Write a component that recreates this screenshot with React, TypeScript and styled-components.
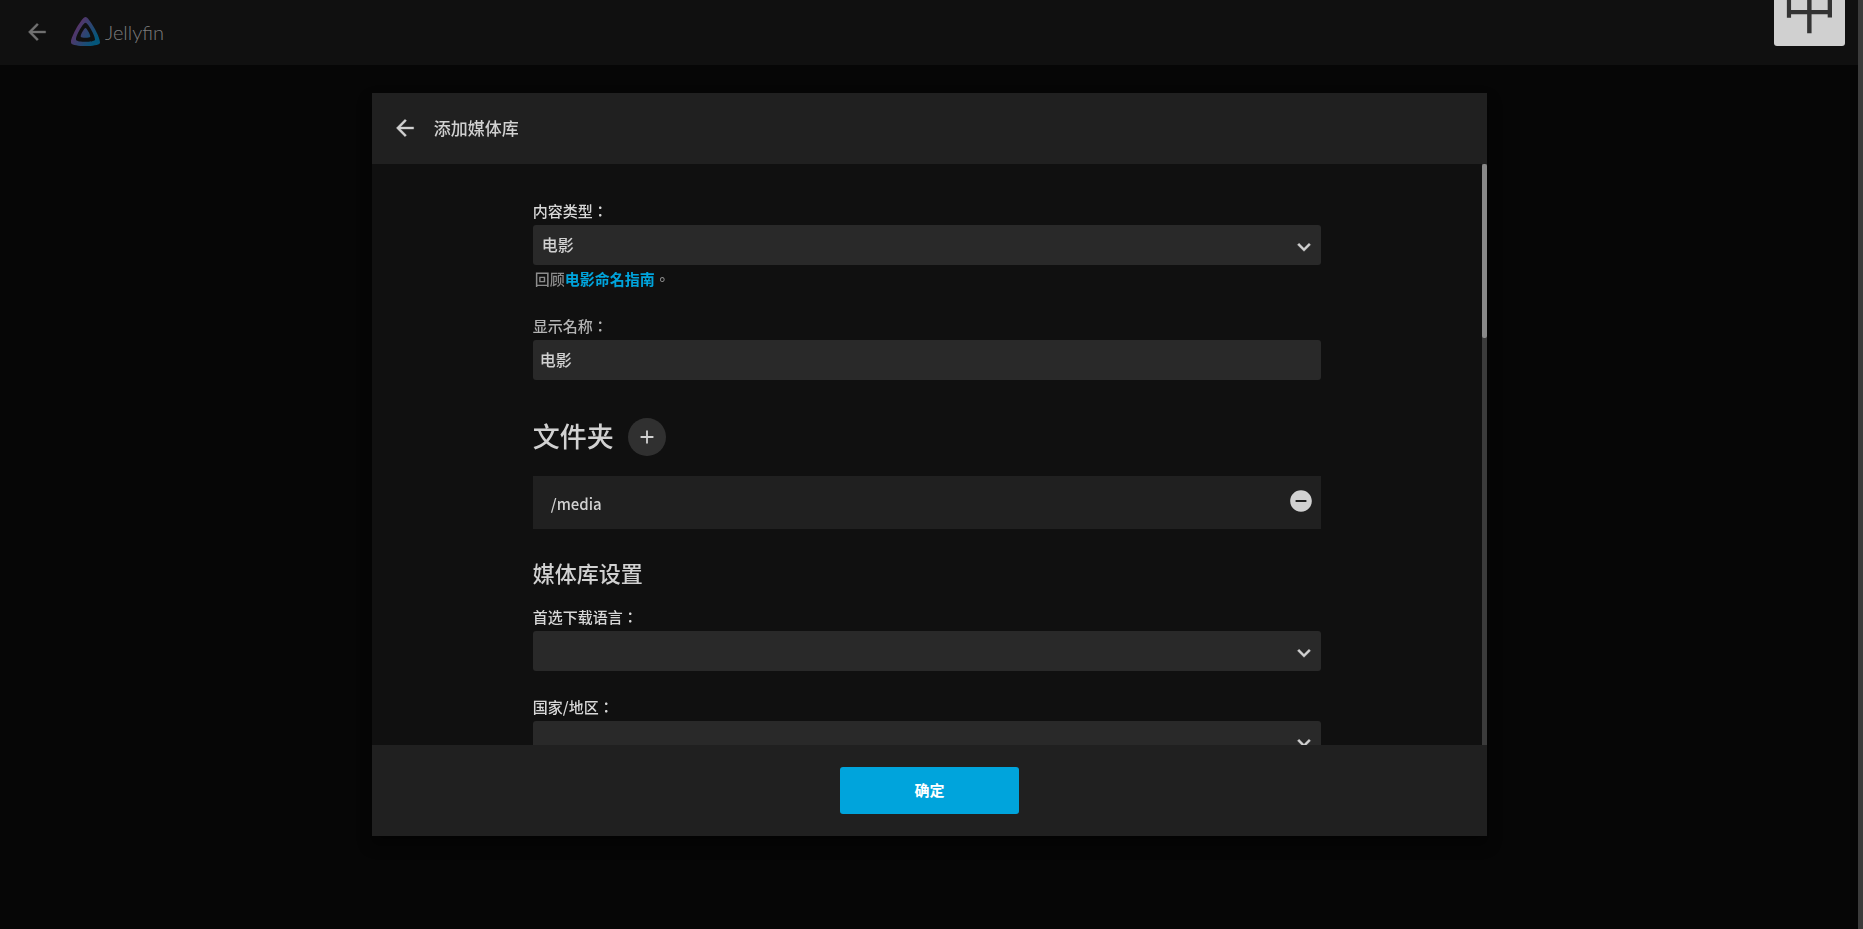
import React, { useState } from 'react';
import styled, { createGlobalStyle } from 'styled-components';
import { MdAdd, MdArrowBack, MdExpandMore, MdRemoveCircle } from 'react-icons/md';

const GlobalStyle = createGlobalStyle`
  *, *::before, *::after { box-sizing: border-box; }
  html { background: #060606; }
  body {
    margin: 0;
    overflow: hidden;
    color: #d1d1d1;
    font-family: "Noto Sans CJK TC", sans-serif;
    font-size: 15px;
    font-weight: 500;
    line-height: 20px;
  }
  button, input, select { font: inherit; color: inherit; }
  path[fill="none"] { stroke: none; }
`;

const Page = styled.div`
  display: flex;
  min-height: 100vh;
  background: #060606;
`;

const Main = styled.div`
  flex: 1;
  min-width: 0;
`;

const TopBar = styled.header`
  display: flex;
  align-items: center;
  gap: 21px;
  height: 65px;
  padding: 0 24px 2px;
  background: #101010;
  color: #717171;
`;

const IconButton = styled.button`
  display: flex;
  flex: none;
  padding: 0;
  border: 0;
  background: none;
  cursor: pointer;
`;

const Brand = styled.a`
  display: flex;
  align-items: center;
  gap: 5px;
  color: #7c7c7c;
  font-family: Lato, sans-serif;
  font-size: 20px;
  font-weight: 300;
  text-decoration: none;
`;

const ScrollTrack = styled.div`
  flex: none;
  width: 5px;
  background: #3b3b3b;
`;

const ScrollThumb = styled.div`
  height: 30%;
  border-radius: 2px;
  background: #888888;
`;

const InputMethodBadge = styled.div`
  position: fixed;
  top: -26px;
  right: 18px;
  width: 71px;
  height: 72px;
  border-radius: 3px;
  background: #d0d0d0;
  color: #333333;
  font-size: 56px;
  font-weight: 400;
  line-height: 60px;
  text-align: center;
`;

const Backdrop = styled.div`
  position: fixed;
  inset: 0 4px 0 0;
  display: flex;
  align-items: center;
  justify-content: center;
`;

const Dialog = styled.section`
  display: flex;
  flex-direction: column;
  width: 60%;
  height: 80%;
  background: #101010;
  box-shadow: 0 8px 12px 1px rgba(0, 0, 0, 0.4);
`;

const DialogHeader = styled.header`
  display: flex;
  flex: none;
  align-items: center;
  gap: 16px;
  height: 71px;
  padding: 0 20px;
  background: #202020;
`;

const DialogTitle = styled.h3`
  margin: 0;
  font-size: 17px;
  font-weight: 500;
  line-height: 24px;
`;

const DialogBody = styled.div`
  display: flex;
  flex: 1;
  min-height: 0;
`;

const Scroller = styled.div`
  flex: 1;
  min-width: 0;
  overflow: hidden;
`;

const Form = styled.form`
  width: 71%;
  margin: 0 auto;
  padding-top: 37px;
`;

const Field = styled.div`
  margin-bottom: 26px;
`;

const Label = styled.label<{ $muted?: boolean }>`
  display: block;
  margin-bottom: 4px;
  color: ${({ $muted }) => ($muted ? '#b4b4b4' : '#d8d8d8')};
`;

const SelectBox = styled.div`
  position: relative;

  svg {
    position: absolute;
    top: 9px;
    right: 4px;
    pointer-events: none;
  }
`;

const Select = styled.select`
  display: block;
  width: 100%;
  height: 40px;
  padding: 0 32px 2px 9px;
  border: 0;
  border-radius: 3px;
  appearance: none;
  background: #292929;
  font-size: 16px;
`;

const TextInput = styled.input`
  display: block;
  width: 100%;
  height: 40px;
  padding: 0 7px 2px;
  border: 0;
  border-radius: 3px;
  background: #292929;
  font-size: 16px;
`;

const Help = styled.div`
  margin-top: 4px;
  padding: 0 0 1px 2px;
  color: #8c8c8c;
`;

const HelpLink = styled.a`
  color: #00a4dc;
  font-weight: 700;
  text-decoration: none;
`;

const FolderHeading = styled.div`
  display: flex;
  align-items: center;
  gap: 14px;
  margin: 38px 0 20px;
`;

const Heading = styled.h1`
  margin: 0;
  font-size: 27px;
  font-weight: 500;
  line-height: 36px;
  padding-bottom: 2px;
`;

const AddButton = styled(IconButton)`
  align-items: center;
  justify-content: center;
  width: 38px;
  height: 38px;
  border-radius: 50%;
  background: #303030;
`;

const FolderRow = styled.div`
  display: flex;
  align-items: center;
  justify-content: space-between;
  height: 53px;
  padding: 0 7px 0 18px;
  background: #202020;
`;

const FolderPath = styled.div`
  padding-top: 3px;
`;

const RemoveButton = styled(IconButton)`
  padding-bottom: 3px;
`;

const SubHeading = styled.h2`
  margin: 27px 0 19px;
  font-size: 22px;
  font-weight: 500;
  line-height: 32px;
`;

const DialogFooter = styled.footer`
  display: flex;
  flex: none;
  align-items: center;
  justify-content: center;
  height: 91px;
  background: #202020;
`;

const SubmitButton = styled.button`
  width: 179px;
  height: 47px;
  padding: 0 0 2px;
  border: 0;
  border-radius: 3px;
  background: #00a4dc;
  color: #ffffff;
  font-weight: 700;
  cursor: pointer;
`;

const JellyfinLogo = () => (
  <svg width="29" height="29" viewBox="0 0 24 24" aria-hidden="true">
    <defs>
      <linearGradient id="jellyfin" x1="3" y1="9" x2="20" y2="19" gradientUnits="userSpaceOnUse">
        <stop offset="0" stopColor="#5b3268" />
        <stop offset="1" stopColor="#04567a" />
      </linearGradient>
    </defs>
    <path
      fill="url(#jellyfin)"
      d="M12 .002C8.826.002-1.398 18.537.16 21.666c1.56 3.129 22.14 3.094 23.682 0C25.384 18.573 15.177 0 12 0zm7.76 18.949c-1.008 2.028-14.493 2.05-15.514 0C3.224 16.9 9.92 4.755 12.003 4.755c2.081 0 8.77 12.166 7.759 14.196zM12 9.198c-1.054 0-4.446 6.15-3.93 7.189.518 1.04 7.348 1.027 7.86 0 .511-1.027-2.874-7.19-3.93-7.19z"
    />
  </svg>
);

interface SelectFieldProps {
  id: string;
  label: string;
  options: string[];
  children?: React.ReactNode;
}

const SelectField = ({ id, label, options, children }: SelectFieldProps) => (
  <Field>
    <Label htmlFor={id}>{label}</Label>
    <SelectBox>
      <Select id={id}>
        {options.map((option) => (
          <option key={option}>{option}</option>
        ))}
      </Select>
      <MdExpandMore size={26} stroke="currentColor" strokeWidth={0.4} />
    </SelectBox>
    {children}
  </Field>
);

export default function App() {
  const [name, setName] = useState('电影');

  return (
    <>
      <GlobalStyle />
      <Page>
        <Main>
          <TopBar>
            <IconButton type="button" aria-label="返回">
              <MdArrowBack size={26} stroke="currentColor" strokeWidth={0.3} />
            </IconButton>
            <Brand href="#">
              <JellyfinLogo />
              Jellyfin
            </Brand>
          </TopBar>
        </Main>
        <ScrollTrack />
      </Page>
      <Backdrop>
        <Dialog role="dialog" aria-labelledby="dialog-title">
          <DialogHeader>
            <IconButton type="button" aria-label="返回">
              <MdArrowBack size={26} stroke="currentColor" strokeWidth={0.3} />
            </IconButton>
            <DialogTitle id="dialog-title">添加媒体库</DialogTitle>
          </DialogHeader>
          <DialogBody>
            <Scroller>
              <Form id="library-form">
                <SelectField id="content-type" label="内容类型：" options={['电影']}>
                  <Help>
                    回顾<HelpLink href="#">电影命名指南</HelpLink>。
                  </Help>
                </SelectField>
                <Field>
                  <Label htmlFor="display-name" $muted>
                    显示名称：
                  </Label>
                  <TextInput
                    id="display-name"
                    type="text"
                    value={name}
                    onChange={(event) => setName(event.target.value)}
                  />
                </Field>
                <FolderHeading>
                  <Heading>文件夹</Heading>
                  <AddButton type="button" aria-label="添加">
                    <MdAdd size={22} />
                  </AddButton>
                </FolderHeading>
                <FolderRow>
                  <FolderPath>/media</FolderPath>
                  <RemoveButton type="button" aria-label="移除">
                    <MdRemoveCircle size={26} />
                  </RemoveButton>
                </FolderRow>
                <SubHeading>媒体库设置</SubHeading>
                <SelectField id="language" label="首选下载语言：" options={['']} />
                <SelectField id="country" label="国家/地区：" options={['']} />
              </Form>
            </Scroller>
            <ScrollTrack>
              <ScrollThumb />
            </ScrollTrack>
          </DialogBody>
          <DialogFooter>
            <SubmitButton type="submit" form="library-form">
              确定
            </SubmitButton>
          </DialogFooter>
        </Dialog>
      </Backdrop>
      <InputMethodBadge>中</InputMethodBadge>
    </>
  );
}
